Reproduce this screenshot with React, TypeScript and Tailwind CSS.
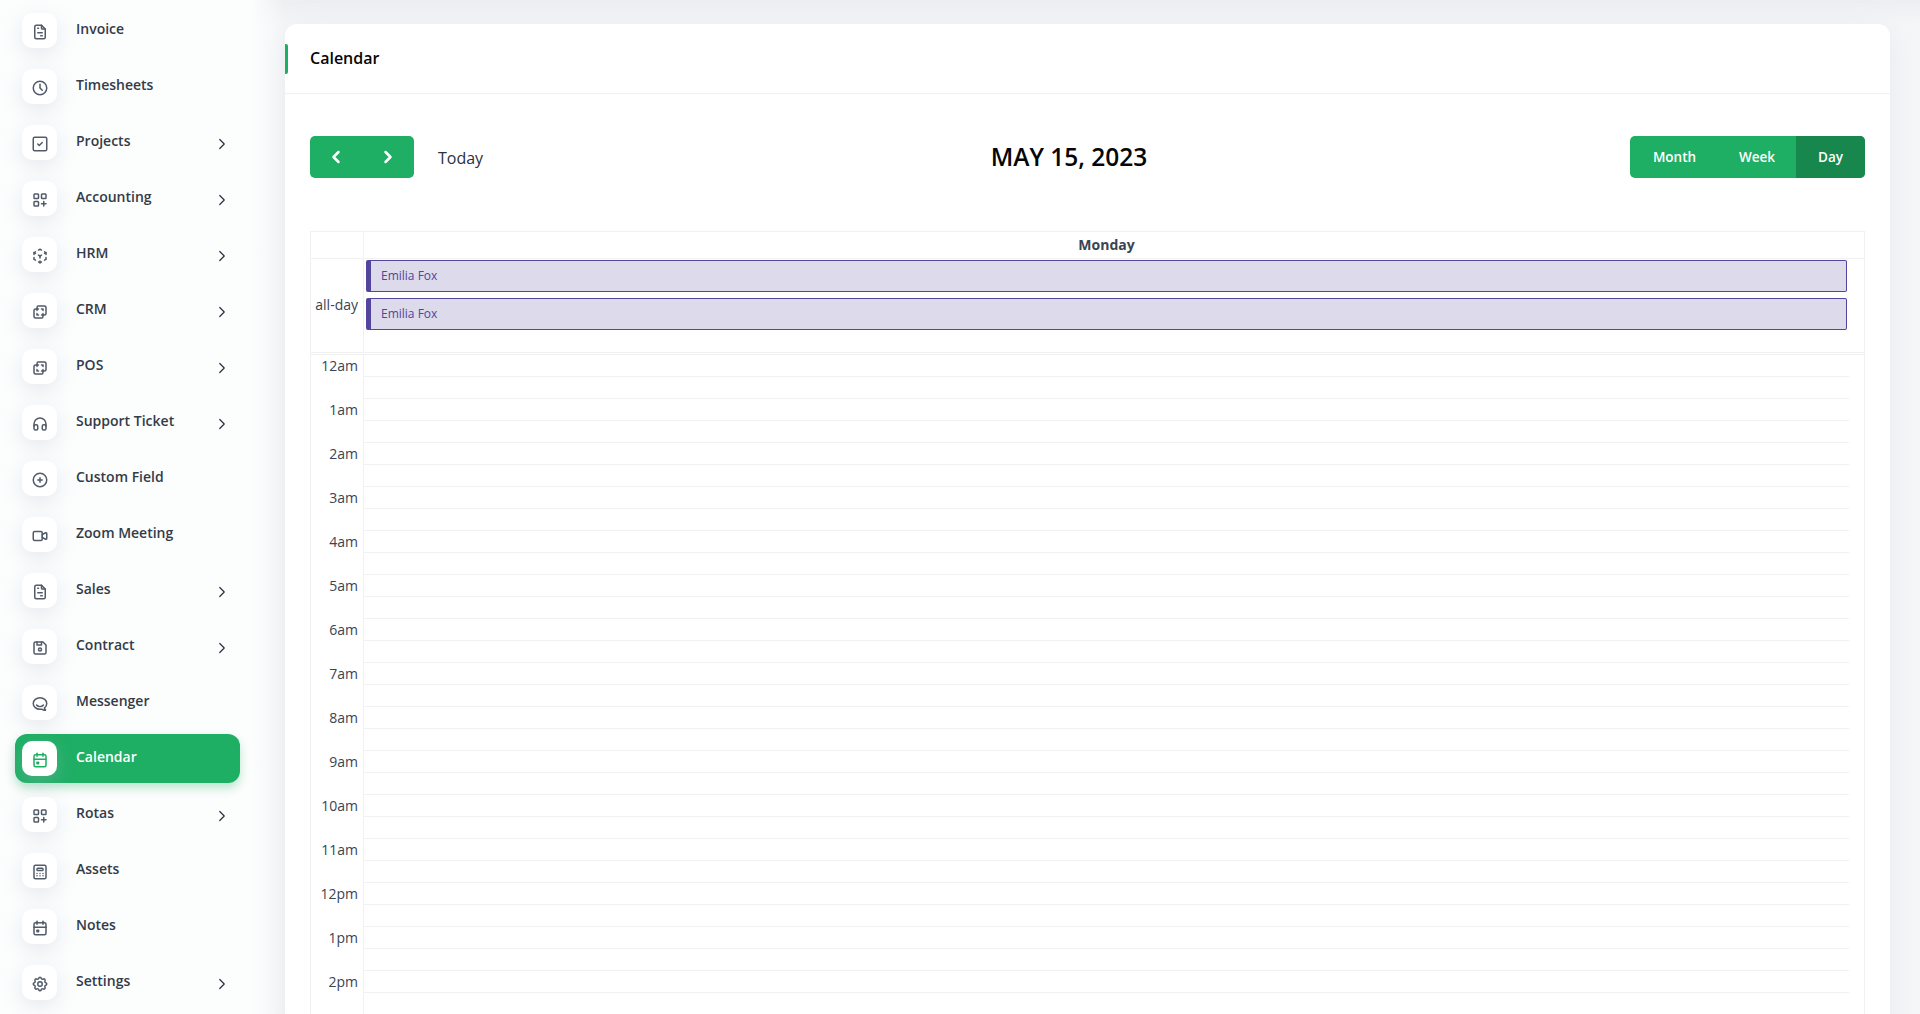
import {
  TbFileInvoice,
  TbClock,
  TbSquareCheck,
  TbLayoutGridAdd,
  TbCube3dSphere,
  TbLayersDifference,
  TbHeadphones,
  TbCirclePlus,
  TbVideo,
  TbDeviceFloppy,
  TbBrandHipchat,
  TbCalendarEvent,
  TbCalculator,
  TbSettings,
  TbChevronRight,
  TbChevronLeft,
} from "react-icons/tb";

const MENU_ITEMS = [
  { label: "Invoice", icon: TbFileInvoice },
  { label: "Timesheets", icon: TbClock },
  { label: "Projects", icon: TbSquareCheck, arrow: true },
  { label: "Accounting", icon: TbLayoutGridAdd, arrow: true },
  { label: "HRM", icon: TbCube3dSphere, arrow: true },
  { label: "CRM", icon: TbLayersDifference, arrow: true },
  { label: "POS", icon: TbLayersDifference, arrow: true },
  { label: "Support Ticket", icon: TbHeadphones, arrow: true },
  { label: "Custom Field", icon: TbCirclePlus },
  { label: "Zoom Meeting", icon: TbVideo },
  { label: "Sales", icon: TbFileInvoice, arrow: true },
  { label: "Contract", icon: TbDeviceFloppy, arrow: true },
  { label: "Messenger", icon: TbBrandHipchat },
  { label: "Calendar", icon: TbCalendarEvent, active: true },
  { label: "Rotas", icon: TbLayoutGridAdd, arrow: true },
  { label: "Assets", icon: TbCalculator },
  { label: "Notes", icon: TbCalendarEvent },
  { label: "Settings", icon: TbSettings, arrow: true },
];

const HOURS = [
  "12am", "1am", "2am", "3am", "4am", "5am", "6am", "7am",
  "8am", "9am", "10am", "11am", "12pm", "1pm", "2pm",
];

const Sidebar = () => (
  <aside className="relative z-10 w-[285px] shrink-0 h-full overflow-hidden pl-[15px] pt-[6px] bg-gradient-to-r from-[#fcfdfd] via-[#fcfdfd] via-[88%] to-transparent">
    {MENU_ITEMS.map((item) => {
      const Icon = item.icon;
      return (
        <div
          key={item.label}
          className={`relative flex items-center w-[225px] h-[49px] mb-[7px] rounded-[12px] pl-[7px] ${
            item.active
              ? "bg-[#1eae64] shadow-[0_5px_10px_rgba(30,174,100,0.3)]"
              : ""
          }`}
        >
          <div
            className={`flex items-center justify-center w-[35px] h-[35px] pt-[2px] rounded-[10px] bg-white shadow-[0_6px_20px_rgba(182,186,203,0.3)] ${
              item.active ? "text-[#1eae64]" : "text-[#525b69]"
            }`}
          >
            <Icon size={18} />
          </div>
          <span
            className={`ml-[19px] -mt-[3px] text-sm font-semibold ${
              item.active ? "text-white" : "text-[#333b48]"
            }`}
          >
            {item.label}
          </span>
          {item.arrow && (
            <TbChevronRight
              size={18}
              strokeWidth={1.6}
              className="absolute left-[198px] top-[17px] text-[#293240]"
            />
          )}
        </div>
      );
    })}
  </aside>
);

const CalendarGrid = () => (
  <div className="mt-[53px] border border-[#f1f1f1] text-sm text-[#293240]">
    <div className="flex h-[26px]">
      <div className="w-[53px] shrink-0 border-r border-[#f1f1f1]" />
      <div className="flex-1 mr-[15px] text-center font-bold text-sm leading-[26px] text-[#3a4452]">
        Monday
      </div>
    </div>
    <div className="flex h-[94px] border-t border-[#f1f1f1]">
      <div className="w-[53px] shrink-0 border-r border-[#f1f1f1] pr-[5px] pt-[36px] text-right leading-[20px] text-[#3a4452]">
        all-day
      </div>
      <div className="flex-1 pl-[2px] pr-[17px] pt-[2px] -mt-[1px]">
        {[0, 1].map((i) => (
          <div
            key={i}
            className="h-[32px] mb-[6px] flex items-center rounded-[2px] border border-[#51459d] border-l-[5px] bg-[#dcdaeb] pl-[10px] text-xs text-[#51459d]"
          >
            Emilia Fox
          </div>
        ))}
      </div>
    </div>
    <div className="h-[3px] border-y border-[#f1f1f1]" />
    <div className="h-[660px] overflow-hidden">
      {HOURS.map((hour) => (
        <div key={hour} className="flex">
          <div className="w-[53px] shrink-0 border-r border-[#f1f1f1]">
            <div className="h-[22px] pr-[5px] text-right leading-[22px] text-[#3a4452]">
              {hour}
            </div>
            <div className="h-[22px]" />
          </div>
          <div className="flex-1 mr-[15px]">
            <div className="h-[22px] border-b border-[#f1f1f1]" />
            <div className="h-[22px] border-b border-[#f1f1f1]" />
          </div>
        </div>
      ))}
    </div>
  </div>
);

const App = () => {
  return (
    <div className="relative flex h-[1014px] overflow-hidden bg-[#f5f6f8] font-['Open_Sans',sans-serif]">
      <div className="absolute inset-x-0 top-0 h-[24px] bg-gradient-to-b from-[#eceef1] to-[#f5f6f8]" />
      <Sidebar />
      <main className="relative flex-1 pt-[24px] pr-[30px] min-w-0">
        <div className="h-[1100px] rounded-[12px] bg-white shadow-[0_6px_30px_rgba(182,186,203,0.2)]">
          <div className="relative flex h-[70px] items-center border-b border-[#f1f1f1] pl-[25px]">
            <div className="absolute left-0 top-[20px] h-[30px] w-[3px] rounded-r-[2px] bg-[#1eae64]" />
            <h5 className="-mt-[2px] text-base font-semibold text-[#060606]">Calendar</h5>
          </div>
          <div className="px-[25px] pt-[42px]">
            <div className="flex h-[42px] items-center justify-between">
              <div className="flex items-center">
                <div className="flex h-[42px] w-[104px] items-center rounded-[5px] bg-[#1eae64] text-white">
                  <div className="flex w-[52px] justify-center">
                    <TbChevronLeft size={20} strokeWidth={3} />
                  </div>
                  <div className="flex w-[52px] justify-center">
                    <TbChevronRight size={20} strokeWidth={3} />
                  </div>
                </div>
                <span className="ml-[24px] mt-[1px] w-[70px] text-base text-[#293240]">Today</span>
              </div>
              <h2 className="text-[24.5px] font-semibold text-[#060606]">
                MAY 15, 2023
              </h2>
              <div className="flex h-[42px] overflow-hidden rounded-[5px] bg-[#1eae64] pt-[1px] text-[13.5px] font-semibold text-white">
                <div className="flex w-[88px] items-center justify-center pl-[1px]">Month</div>
                <div className="flex w-[78px] items-center justify-center">Week</div>
                <div className="-mt-[1px] flex w-[69px] items-center justify-center bg-[#18874e] pt-[1px]">Day</div>
              </div>
            </div>
            <CalendarGrid />
          </div>
        </div>
      </main>
    </div>
  );
};

export default App;
